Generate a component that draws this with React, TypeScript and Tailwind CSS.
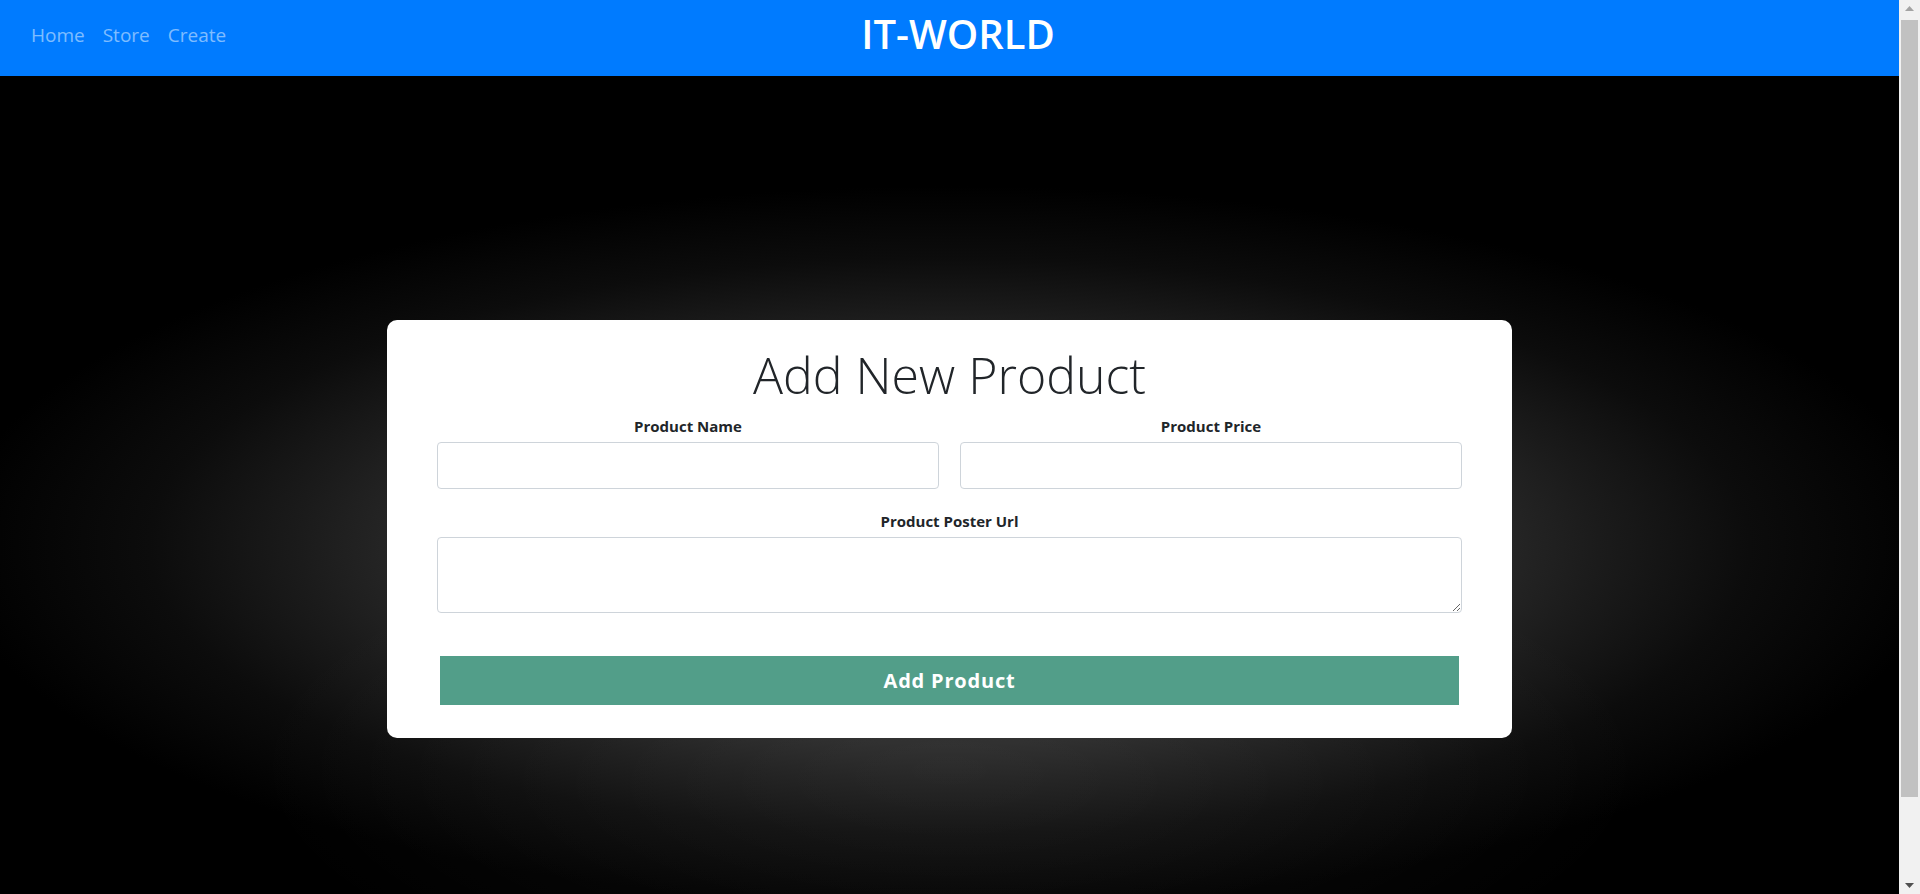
import React from "react";

export default function App() {
  const font = { fontFamily: '"Open Sans", "Noto Sans", Arial, sans-serif' };
  return (
    <div className="flex h-[894px] overflow-hidden bg-black" style={font}>
      <div className="flex min-w-0 flex-1 flex-col">
        <nav className="grid h-[76px] shrink-0 grid-cols-[1fr_auto_1fr] items-start bg-[#007bff]">
          <div className="flex pl-[22px] pt-[21px]">
            <a className="px-[9px] text-[19px] leading-[28px] text-white/50" href="#">Home</a>
            <a className="px-[9px] text-[19px] leading-[28px] text-white/50" href="#">Store</a>
            <a className="px-[9px] text-[19px] leading-[28px] text-white/50" href="#">Create</a>
          </div>
          <div className="ml-[17px] pt-[10px] text-[40px] font-semibold leading-[48px] text-white">IT-WORLD</div>
          <div />
        </nav>
        <main className="flex h-[914px] shrink-0 justify-center bg-[radial-gradient(700px_260px_at_50%_690px,rgba(255,255,255,0.06),rgba(255,255,255,0)),radial-gradient(1000px_360px_at_50%_470px,#2c2c2c_0%,#262626_55%,#1b1b1b_65%,#0c0c0c_80%,#000_100%)] pt-[244px]">
          <div className="h-[418px] w-[1125px] rounded-[10px] bg-white px-[50px] pb-[32px] pt-[26px]">
            <h1 className="text-center text-[50px] font-light leading-[58px] text-[#212529]">Add New Product</h1>
            <div className="mt-[12px] grid grid-cols-2 gap-x-[21px]">
              <div className="flex flex-col">
                <label className="mb-[6px] text-center text-[15px] font-bold leading-[20px] text-[#212529]">Product Name</label>
                <input className="h-[47px] rounded-[4px] border border-[#ced4da] bg-white px-3 outline-none" type="text" />
              </div>
              <div className="flex flex-col">
                <label className="mb-[6px] text-center text-[15px] font-bold leading-[20px] text-[#212529]">Product Price</label>
                <input className="h-[47px] rounded-[4px] border border-[#ced4da] bg-white px-3 outline-none" type="text" />
              </div>
            </div>
            <div className="mt-[22px] flex flex-col">
              <label className="mb-[6px] text-center text-[15px] font-bold leading-[20px] text-[#212529]">Product Poster Url</label>
              <textarea className="block h-[76px] rounded-[4px] border border-[#ced4da] bg-white px-3 outline-none" />
            </div>
            <button className="mx-[3px] mt-[43px] flex h-[49px] w-[1019px] items-center justify-center bg-[#529e89] text-[20px] font-bold tracking-[0.8px] text-white">
              Add Product
            </button>
          </div>
        </main>
      </div>
      <div className="flex w-[21px] shrink-0 flex-col bg-[#f1f1f1]">
        <div className="flex h-[17px] items-center justify-center">
          <svg width="9" height="5" viewBox="0 0 9 5"><path d="M4.5 0 L9 5 L0 5 Z" fill="#a3a3a3" /></svg>
        </div>
        <div className="mx-[2px] mt-[3px] h-[777px] bg-[#c1c1c1]" />
        <div className="flex-1" />
        <div className="flex h-[17px] items-center justify-center">
          <svg width="9" height="5" viewBox="0 0 9 5"><path d="M0 0 L9 0 L4.5 5 Z" fill="#505050" /></svg>
        </div>
      </div>
    </div>
  );
}
